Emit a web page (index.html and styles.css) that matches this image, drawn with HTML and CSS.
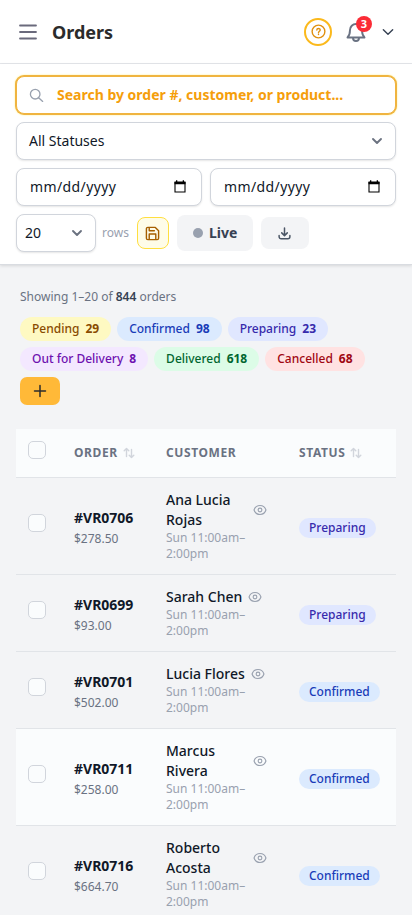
FILE: index.html
```html
<!DOCTYPE html>
<html lang="en">
<head>
<meta charset="utf-8">
<meta name="viewport" content="width=device-width, initial-scale=1">
<title>Orders</title>
<link rel="stylesheet" href="styles.css">
</head>
<body>
<svg class="defs" width="0" height="0" aria-hidden="true">
  <symbol id="eye" viewBox="0 0 24 24"><path d="M1.800 12C3.300 7.200 7.300 4.300 12 4.300S20.700 7.200 22.200 12C20.700 16.800 16.700 19.700 12 19.700S3.300 16.800 1.800 12Z"/><circle cx="12" cy="12" r="3.200"/></symbol>
  <symbol id="sort" viewBox="0 0 12 12"><path d="M3.500 9.500V1.500M1.200 3.800 3.500 1.500 5.800 3.800M8.500 2.500V10.500M6.200 8.200 8.500 10.500 10.800 8.200"/></symbol>
  <symbol id="chevron" viewBox="0 0 12 12"><path d="M2 4 6 8 10 4"/></symbol>
  <symbol id="calendar" viewBox="0 0 12 13"><path class="frame" d="M1 2.500H11V12H1Z"/><path class="solid" d="M.5 1.500H2V.3H3.300V1.500H8.700V.3H10V1.500H11.500V4.300H.5Z"/></symbol>
</svg>
<header class="topbar">
  <svg class="menu" viewBox="0 0 20 16"><path d="M2 1.500H18M2 8H18M2 14.500H18"/></svg>
  <h1>Orders</h1>
  <div class="help"><svg viewBox="0 0 16 16"><circle cx="8" cy="8" r="6.800"/><path d="M6.200 6.500C6.200 4.200 9.800 4.200 9.800 6.400C9.800 7.800 8 7.700 8 9.200M8 11V11.300"/></svg></div>
  <div class="bell">
    <svg viewBox="0 0 20 22"><path d="M1.500 16.500C3.500 14.500 4 13 4 9A6 6 0 0 1 16 9C16 13 16.500 14.500 18.500 16.500ZM7 17C7 21 13 21 13 17"/></svg>
    <span class="count">3</span>
  </div>
  <svg class="account" viewBox="0 0 12 12"><use href="#chevron"/></svg>
</header>
<section class="filters">
  <div class="field search">
    <svg viewBox="0 0 16 16"><circle cx="6.600" cy="6.600" r="5.100"/><path d="M10.300 10.300 14.600 14.300"/></svg>
    <span>Search by order #, customer, or product...</span>
  </div>
  <div class="field select"><span>All Statuses</span><svg viewBox="0 0 12 12"><use href="#chevron"/></svg></div>
  <div class="dates">
    <div class="field date"><span>mm/dd/yyyy</span><svg><use href="#calendar"/></svg></div>
    <div class="field date"><span>mm/dd/yyyy</span><svg><use href="#calendar"/></svg></div>
  </div>
  <div class="tools">
    <div class="field select size"><span>20</span><svg viewBox="0 0 12 12"><use href="#chevron"/></svg></div>
    <span class="rows">rows</span>
    <div class="save"><svg viewBox="0 0 16 16"><path d="M3 1.500H11L14.500 5V13A1.500 1.500 0 0 1 13 14.500H3A1.500 1.500 0 0 1 1.500 13V3A1.500 1.500 0 0 1 3 1.500ZM4.500 1.500V5H10M4.500 14.500V8.500H11.500V14.500"/></svg></div>
    <div class="live"><i></i>Live</div>
    <div class="download"><svg viewBox="0 0 14 14"><path d="M7 1V9M4 6.300 7 9.300 10 6.300M1.200 9.200V10.500A2.200 2.200 0 0 0 3.400 12.700H10.600A2.200 2.200 0 0 0 12.800 10.500V9.200"/></svg></div>
  </div>
</section>
<main>
  <p class="summary">Showing 1–20 of <b>844</b> orders</p>
  <div class="chips">
    <span class="chip pending">Pending <b>29</b></span>
    <span class="chip confirmed">Confirmed <b>98</b></span>
    <span class="chip preparing">Preparing <b>23</b></span>
    <span class="chip transit">Out for Delivery <b>8</b></span>
    <span class="chip delivered">Delivered <b>618</b></span>
    <span class="chip cancelled">Cancelled <b>68</b></span>
    <span class="add"><svg viewBox="0 0 14 14"><path d="M7 1.500V12.500M1.500 7H12.500"/></svg></span>
  </div>
  <table>
    <colgroup><col class="c-check"><col class="c-order"><col class="c-customer"><col></colgroup>
    <thead><tr>
      <th><span class="check"></span></th>
      <th>ORDER<svg class="sort"><use href="#sort"/></svg></th>
      <th>CUSTOMER</th>
      <th>STATUS<svg class="sort"><use href="#sort"/></svg></th>
    </tr></thead>
    <tbody>
      <tr>
        <td><span class="check"></span></td>
        <td><div class="number">#VR0706</div><div class="price">$278.50</div></td>
        <td><div class="name"><span>Ana Lucia Rojas</span><svg><use href="#eye"/></svg></div><div class="slot">Sun 11:00am–2:00pm</div></td>
        <td><span class="badge preparing">Preparing</span></td>
      </tr>
      <tr>
        <td><span class="check"></span></td>
        <td><div class="number">#VR0699</div><div class="price">$93.00</div></td>
        <td><div class="name"><span>Sarah Chen</span><svg><use href="#eye"/></svg></div><div class="slot">Sun 11:00am–2:00pm</div></td>
        <td><span class="badge preparing">Preparing</span></td>
      </tr>
      <tr>
        <td><span class="check"></span></td>
        <td><div class="number">#VR0701</div><div class="price">$502.00</div></td>
        <td><div class="name"><span>Lucia Flores</span><svg><use href="#eye"/></svg></div><div class="slot">Sun 11:00am–2:00pm</div></td>
        <td><span class="badge confirmed">Confirmed</span></td>
      </tr>
      <tr class="active">
        <td><span class="check"></span></td>
        <td><div class="number">#VR0711</div><div class="price">$258.00</div></td>
        <td><div class="name"><span>Marcus Rivera</span><svg><use href="#eye"/></svg></div><div class="slot">Sun 11:00am–2:00pm</div></td>
        <td><span class="badge confirmed">Confirmed</span></td>
      </tr>
      <tr>
        <td><span class="check"></span></td>
        <td><div class="number">#VR0716</div><div class="price">$664.70</div></td>
        <td><div class="name"><span>Roberto Acosta</span><svg><use href="#eye"/></svg></div><div class="slot">Sun 11:00am–2:00pm</div></td>
        <td><span class="badge confirmed">Confirmed</span></td>
      </tr>
    </tbody>
  </table>
</main>
</body>
</html>
```
FILE: styles.css
```css
* { box-sizing: border-box; }
html { height: 100%; overflow: hidden; }
body {
  margin: 0;
  height: 100%;
  overflow: hidden;
  background: #f3f4f6;
  font: 14px/20px "Noto Sans", sans-serif;
  color: #101828;
}
.defs { position: absolute; }
svg { display: block; flex: none; fill: none; stroke: currentColor; stroke-linecap: round; stroke-linejoin: round; }

.topbar {
  display: flex;
  align-items: center;
  height: 64px;
  padding: 0 17px 0 18px;
  background: #fff;
  border-bottom: 1px solid #e5e7eb;
}
.menu { width: 20px; height: 16px; color: #6a6a7c; stroke-width: 1.8; }
h1 { margin: 1px auto 0 14px; font-size: 18px; line-height: 28px; font-weight: 700; color: #2b2b2b; }
.help {
  display: grid;
  place-items: center;
  width: 28px;
  height: 28px;
  margin-right: 14px;
  border: 2px solid #fbb91c;
  border-radius: 50%;
  color: #e0900f;
}
.help svg { width: 15px; height: 15px; stroke-width: 1.5; }
.bell { position: relative; margin-right: 15px; color: #6a7282; }
.bell svg { width: 20px; height: 22px; stroke-width: 1.9; }
.count {
  position: absolute;
  top: -5px;
  left: 10px;
  width: 16px;
  height: 16px;
  border-radius: 50%;
  background: #fb2c36;
  color: #fff;
  font-size: 11px;
  line-height: 16px;
  font-weight: 700;
  text-align: center;
}
.account { width: 14px; height: 14px; color: #364153; stroke-width: 1.2; }

.filters {
  display: flex;
  flex-direction: column;
  gap: 8px;
  height: 201px;
  padding: 12px 16px;
  background: #fff;
  border-bottom: 1px solid #d9dce1;
  box-shadow: 0 1px 3px rgba(0, 0, 0, .12);
}
.field {
  display: flex;
  align-items: center;
  height: 38px;
  border: 1px solid #d1d5dc;
  border-radius: 8px;
  background: #fff;
  box-shadow: 0 1px 2px rgba(0, 0, 0, .1);
}
.search {
  border-color: #f0b440;
  padding-left: 12px;
  box-shadow: 0 0 0 1px #f0b440, 0 0 2px 1px #fff08a;
  color: #f59e0b;
  font-weight: 700;
}
.search svg { width: 15px; height: 15px; margin-right: 13px; color: #99a1af; stroke-width: 1.4; }
.select { justify-content: space-between; padding: 0 12px; }
.select svg { width: 12px; height: 12px; color: #6b7280; stroke-width: 1.9; }
.dates { display: grid; grid-template-columns: 1fr 1fr; gap: 8px; }
.date { justify-content: space-between; padding: 0 15px 0 13px; }
.date span { letter-spacing: .4px; }
.date svg { width: 12px; height: 13px; margin-top: -1px; color: #000; }
.frame { stroke-width: 1.1; stroke-linejoin: miter; }
.solid { fill: currentColor; stroke: none; }
.tools { display: flex; align-items: center; }
.size { width: 80px; padding-left: 8px; }
.rows { margin: 0 8px 0 6px; font-size: 12px; color: #99a1af; }
.save {
  display: grid;
  place-items: center;
  width: 32px;
  height: 32px;
  border: 1px solid #ffdf40;
  border-radius: 8px;
  background: #fefce8;
  color: #a65f00;
}
.save svg { width: 15px; height: 15px; stroke-width: 1.5; }
.live {
  display: flex;
  align-items: center;
  gap: 6px;
  width: 76px;
  height: 36px;
  margin: 0 8px;
  padding-left: 16px;
  border-radius: 8px;
  background: #f3f4f6;
  color: #364153;
  font-weight: 700;
}
.live i { width: 10px; height: 10px; border-radius: 50%; background: #99a1af; }
.download {
  display: grid;
  place-items: center;
  width: 48px;
  height: 32px;
  border-radius: 8px;
  background: #f3f4f6;
  color: #4a5565;
}
.download svg { width: 13px; height: 13px; stroke-width: 1.6; }

main { padding: 24px 16px 0; }
.summary { margin: 0 4px 12px; font-size: 12px; line-height: 16px; color: #6a7282; }
.summary b { font-weight: 600; color: #364153; }
.chips { display: flex; flex-wrap: wrap; gap: 6px; margin: 0 4px 24px; }
.chip {
  display: flex;
  gap: 6px;
  padding: 4px 12px;
  border-radius: 12px;
  font-size: 12px;
  line-height: 16px;
  font-weight: 500;
}
.chip b { font-weight: 700; }
.pending { background: #fef9c2; color: #894b00; }
.confirmed { background: #dbeafe; color: #193cb8; }
.preparing { background: #e0e7ff; color: #372aac; }
.transit { background: #f3e8ff; color: #6e11b0; }
.delivered { background: #dcfce7; color: #016630; }
.cancelled { background: #ffe2e2; color: #9f0712; }
.add {
  display: grid;
  place-items: center;
  width: 40px;
  height: 28px;
  border-radius: 7px;
  background: #ffb938;
  color: #2b2b2b;
}
.add svg { width: 14px; height: 14px; stroke-width: 1.5; }

table { width: 380px; table-layout: fixed; border-collapse: separate; border-spacing: 0; }
.c-check { width: 46px; }
.c-order { width: 92px; }
.c-customer { width: 133px; }
th, td { padding: 12px 0 12px 12px; border-bottom: 1px solid #e1e4e8; text-align: left; vertical-align: middle; }
th {
  height: 49px;
  background: #fafcfd;
  color: #6a7282;
  font-size: 12px;
  line-height: 16px;
  font-weight: 700;
  letter-spacing: .6px;
  white-space: nowrap;
}
td:first-child { padding-bottom: 18px; }
th { padding-top: 11px; padding-bottom: 11px; }
th:first-child { padding-top: 9px; padding-bottom: 15px; }
.check { display: block; width: 18px; height: 18px; border: 1px solid #d1d5dc; border-radius: 5px; background: #fafcfd; }
.sort { display: inline-block; width: 12px; height: 12px; margin-left: 5px; vertical-align: -2px; color: #d1d5dc; stroke-width: 1.4; }
.active td { background: #fafcfd; }
td:nth-child(2) { padding-top: 15px; }
.number { font-weight: 700; }
.price { margin-top: 3px; font-size: 12px; line-height: 16px; color: #6a7282; }
.name { display: flex; align-items: center; gap: 6px; width: 101px; font-weight: 500; }
.name svg { width: 14px; height: 14px; color: #99a1af; stroke-width: 1.9; }
.slot { width: 101px; font-size: 12px; line-height: 16px; color: #99a1af; }
td:last-child { padding-top: 16px; }
.badge { display: block; width: max-content; padding: 2px 10px; border-radius: 10px; font-size: 12px; line-height: 16px; font-weight: 500; }
```
